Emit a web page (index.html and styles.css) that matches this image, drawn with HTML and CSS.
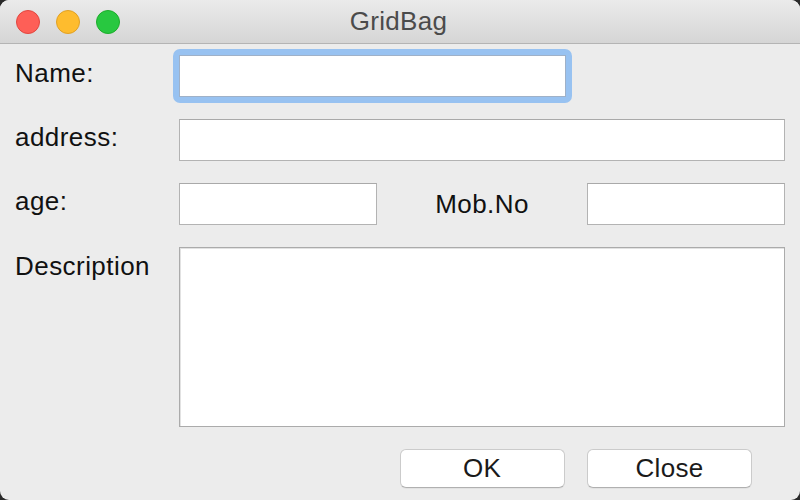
FILE: index.html
```html
<!DOCTYPE html>
<html>
<head>
<meta charset="utf-8">
<title>GridBag</title>
<link rel="stylesheet" href="styles.css">
</head>
<body>
<div class="window">
  <div class="titlebar">
    <div class="lights">
      <span class="light red"></span>
      <span class="light yellow"></span>
      <span class="light green"></span>
    </div>
    <div class="title">GridBag</div>
  </div>
  <div class="form">
    <label class="label">Name:</label>
    <div class="name-cell"><span class="ring"><input class="field name-field" type="text"></span></div>

    <label class="label">address:</label>
    <input class="field wide" type="text">

    <label class="label">age:</label>
    <input class="field" type="text">
    <label class="label mid">Mob.No</label>
    <input class="field" type="text">

    <label class="label desc">Description</label>
    <textarea class="area wide"></textarea>

    <div class="buttons-spacer"></div>
    <div class="buttons-spacer"></div>
    <button class="btn ok">OK</button>
    <button class="btn close">Close</button>
  </div>
</div>
</body>
</html>
```

FILE: styles.css
```css
html, body {
  margin: 0;
  padding: 0;
  background: #2a2a2a;
}

.window {
  width: 800px;
  height: 500px;
  background: #ececec;
  border-radius: 9px;
  overflow: hidden;
  font-family: "Liberation Sans", Arial, sans-serif;
  font-size: 26px;
  color: #111;
}

.titlebar {
  height: 43px;
  border-bottom: 1px solid #b4b4b4;
  background: linear-gradient(#ebebeb, #d5d5d5);
  display: grid;
  align-items: center;
}

.lights, .title {
  grid-area: 1 / 1;
}

.lights {
  display: flex;
  gap: 16px;
  padding-left: 16px;
  justify-self: start;
}

.light {
  width: 24px;
  height: 24px;
  box-sizing: border-box;
  border-radius: 50%;
  display: block;
}

.red { background: #fe5f57; border: 1px solid #e2463f; }
.yellow { background: #febc2e; border: 1px solid #e1a124; }
.green { background: #28c840; border: 1px solid #1dad2b; }

.title {
  justify-self: center;
  color: #4b4b4b;
  letter-spacing: 0.3px;
  margin-left: -3px;
}

.form {
  display: grid;
  grid-template-columns: 164px 198px 210px 198px;
  grid-template-rows: 42px 42px 42px 180px 39px;
  row-gap: 22px;
  padding: 11px 15px 0 15px;
}

.label {
  align-self: start;
  padding-top: 3px;
  line-height: 31px;
  color: #111;
  letter-spacing: 0.45px;
}

.label.desc {
  padding-top: 4px;
}

.label.mid {
  align-self: center;
  justify-self: center;
  padding-top: 0;
}

.name-cell {
  grid-column: 2 / span 3;
}

.ring {
  display: inline-block;
  margin: -6px;
  padding: 6px;
  background: #98c2f1;
  border-radius: 7px;
}

.field {
  display: block;
  box-sizing: border-box;
  height: 42px;
  margin: 0;
  border: 1px solid #b3b3b3;
  border-top-color: #a9a9a9;
  background: #fff;
  outline: none;
  font: inherit;
  padding: 0 6px;
  -webkit-appearance: none;
  appearance: none;
  border-radius: 0;
}

.name-field {
  width: 387px;
  border-color: #9fb1c8;
}

.wide {
  grid-column: 2 / span 3;
}

.area {
  display: block;
  box-sizing: border-box;
  width: 606px;
  height: 180px;
  margin: 0;
  border: 1px solid #ababab;
  box-shadow: inset 1px 1px 0 #e2e2e2;
  background: #fff;
  resize: none;
  outline: none;
  font: inherit;
  padding: 4px;
}

.buttons-spacer {
  height: 1px;
}

.btn {
  width: 165px;
  height: 39px;
  box-sizing: border-box;
  margin: 0;
  padding: 0;
  background: #fff;
  border: 1px solid #cbcbcb;
  border-bottom-color: #b0b0b0;
  border-radius: 6px;
  box-shadow: 0 1px 0 rgba(0,0,0,0.04);
  font: inherit;
  color: #1a1a1a;
  line-height: 37px;
  letter-spacing: 0.3px;
}

.btn.ok {
  justify-self: center;
}

.btn.close {
  justify-self: start;
}
```
